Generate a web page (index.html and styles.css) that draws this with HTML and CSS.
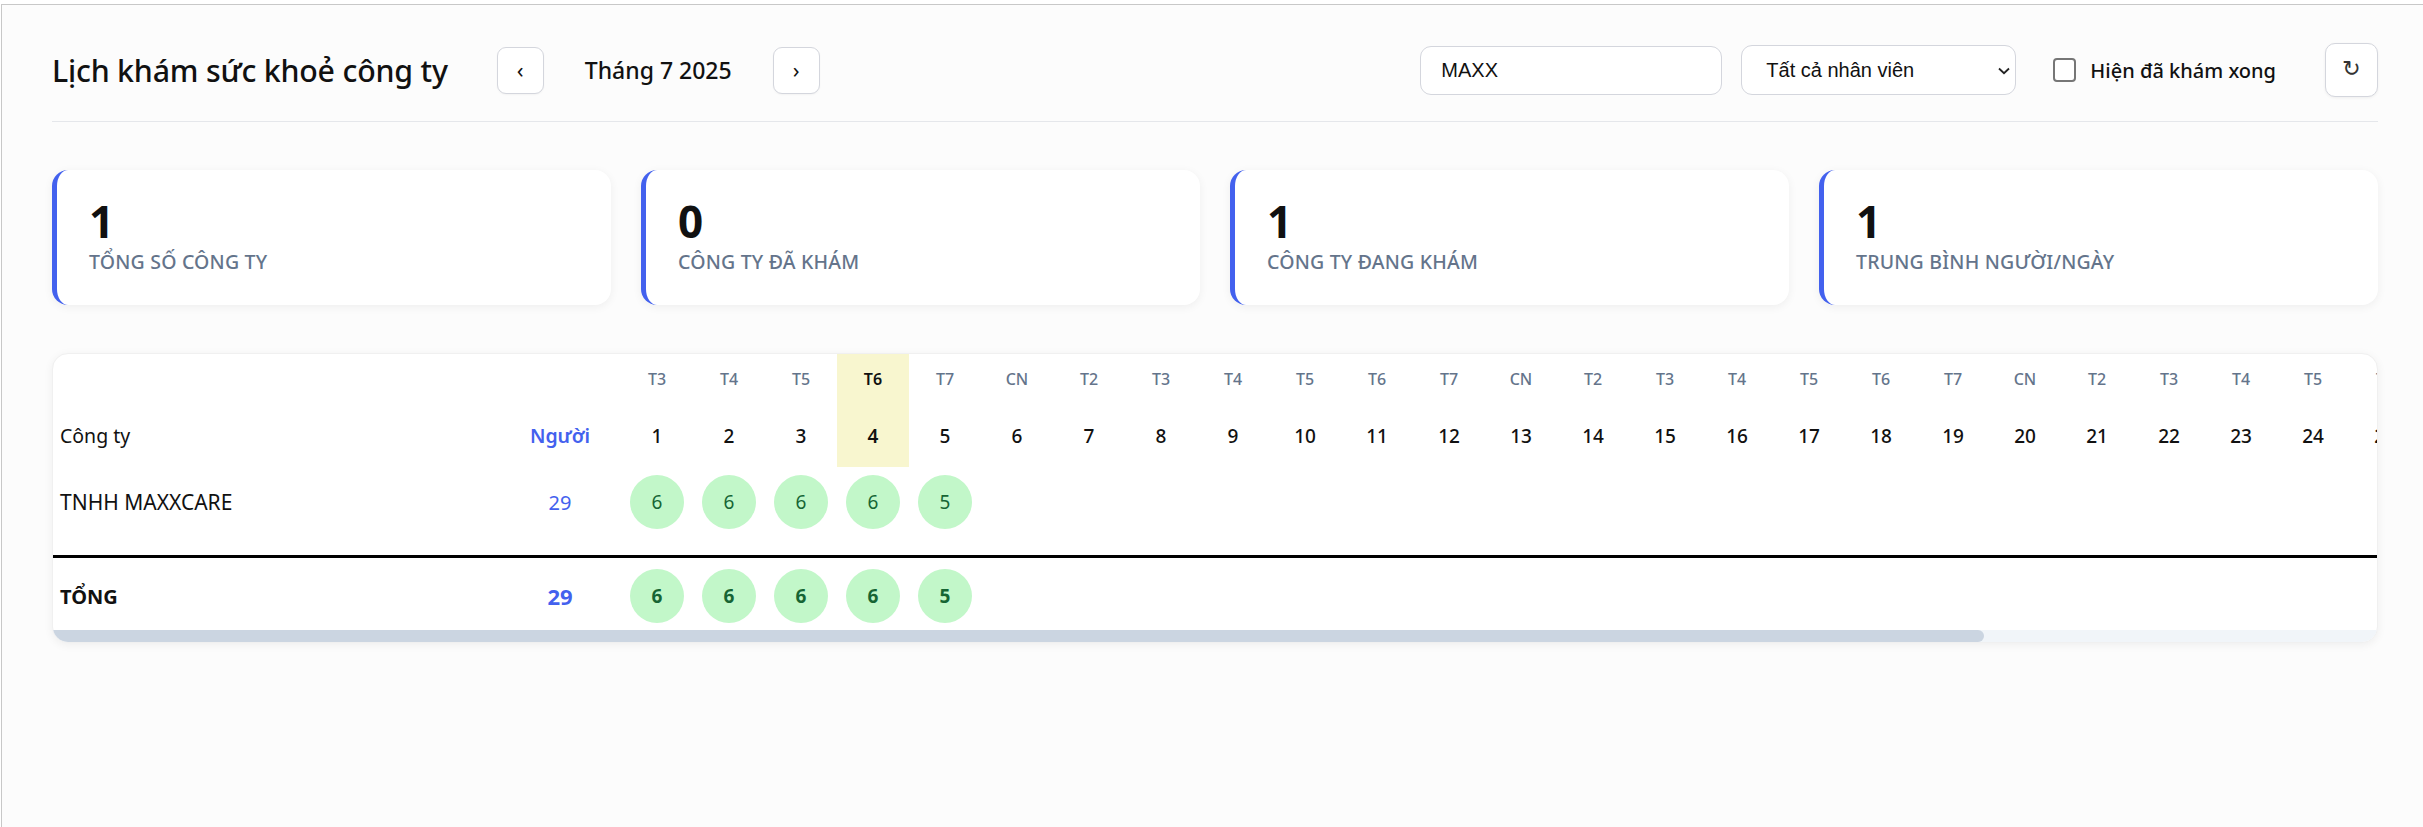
FILE: index.html
```html
<!DOCTYPE html>
<html lang="vi">
<head>
<meta charset="utf-8">
<title>Lịch khám sức khoẻ công ty</title>
<link rel="stylesheet" href="styles.css">
</head>
<body>
<div class="frame">
  <header class="topbar">
    <div class="left-group">
      <h1 class="title">Lịch khám sức khoẻ công ty</h1>
      <div class="month-nav">
        <button class="nav-btn">‹</button>
        <div class="month-label">Tháng 7 2025</div>
        <button class="nav-btn">›</button>
      </div>
    </div>
    <div class="right-group">
      <input class="search" type="text" value="MAXX">
      <div class="select-wrap">
        <select class="staff-select"><option>Tất cả nhân viên</option></select>
        <svg class="chev" width="12" height="8" viewBox="0 0 12 8"><path d="M1 1.5 L6 6.2 L11 1.5" fill="none" stroke="#222" stroke-width="1.8"/></svg>
      </div>
      <label class="check-label"><span class="checkbox"></span><span>Hiện đã khám xong</span></label>
      <button class="refresh-btn">↻</button>
    </div>
  </header>

  <section class="stats">
    <div class="stat"><div class="stat-num">1</div><div class="stat-label">Tổng số công ty</div></div>
    <div class="stat"><div class="stat-num">0</div><div class="stat-label">Công ty đã khám</div></div>
    <div class="stat"><div class="stat-num">1</div><div class="stat-label">Công ty đang khám</div></div>
    <div class="stat"><div class="stat-num">1</div><div class="stat-label">Trung bình người/ngày</div></div>
  </section>

  <section class="table-card">
    <div class="scroller">
      <table class="cal">
        <colgroup>
          <col class="c-company"><col class="c-people">
          <col class="c-day"><col class="c-day"><col class="c-day"><col class="c-day"><col class="c-day"><col class="c-day"><col class="c-day"><col class="c-day"><col class="c-day"><col class="c-day"><col class="c-day"><col class="c-day"><col class="c-day"><col class="c-day"><col class="c-day"><col class="c-day"><col class="c-day"><col class="c-day"><col class="c-day"><col class="c-day"><col class="c-day"><col class="c-day"><col class="c-day"><col class="c-day"><col class="c-day"><col class="c-day"><col class="c-day"><col class="c-day"><col class="c-day"><col class="c-day"><col class="c-day">
        </colgroup>
        <thead>
          <tr class="dow-row">
            <th></th><th></th>
            <th>T3</th><th>T4</th><th>T5</th><th class="today">T6</th><th>T7</th><th>CN</th><th>T2</th>
            <th>T3</th><th>T4</th><th>T5</th><th>T6</th><th>T7</th><th>CN</th><th>T2</th>
            <th>T3</th><th>T4</th><th>T5</th><th>T6</th><th>T7</th><th>CN</th><th>T2</th>
            <th>T3</th><th>T4</th><th>T5</th><th>T6</th><th>T7</th><th>CN</th><th>T2</th>
            <th>T3</th><th>T4</th><th>T5</th>
          </tr>
          <tr class="date-row">
            <th class="company-h">Công ty</th><th class="people-h">Người</th>
            <th>1</th><th>2</th><th>3</th><th class="today">4</th><th>5</th><th>6</th><th>7</th>
            <th>8</th><th>9</th><th>10</th><th>11</th><th>12</th><th>13</th><th>14</th>
            <th>15</th><th>16</th><th>17</th><th>18</th><th>19</th><th>20</th><th>21</th>
            <th>22</th><th>23</th><th>24</th><th>25</th><th>26</th><th>27</th><th>28</th>
            <th>29</th><th>30</th><th>31</th>
          </tr>
        </thead>
        <tbody>
          <tr class="body-row">
            <td class="company">TNHH MAXXCARE</td><td class="people">29</td>
            <td><span class="dot">6</span></td><td><span class="dot">6</span></td><td><span class="dot">6</span></td><td><span class="dot">6</span></td><td><span class="dot">5</span></td>
            <td></td><td></td><td></td><td></td><td></td><td></td><td></td><td></td><td></td><td></td><td></td><td></td><td></td><td></td><td></td><td></td><td></td><td></td><td></td><td></td><td></td><td></td><td></td><td></td><td></td><td></td>
          </tr>
        </tbody>
        <tfoot>
          <tr class="total-row">
            <td class="company total-label">TỔNG</td><td class="people total-num">29</td>
            <td><span class="dot">6</span></td><td><span class="dot">6</span></td><td><span class="dot">6</span></td><td><span class="dot">6</span></td><td><span class="dot">5</span></td>
            <td></td><td></td><td></td><td></td><td></td><td></td><td></td><td></td><td></td><td></td><td></td><td></td><td></td><td></td><td></td><td></td><td></td><td></td><td></td><td></td><td></td><td></td><td></td><td></td><td></td><td></td>
          </tr>
        </tfoot>
      </table>
    </div>
    <div class="scrollbar"><div class="thumb" style="width: 83.1%"></div></div>
  </section>
</div>
</body>
</html>
```

FILE: styles.css
```css
* { box-sizing: border-box; }

html, body {
  margin: 0;
  background: #ffffff;
}

body {
  font-family: "Noto Sans", "Open Sans", sans-serif;
  color: #111827;
}

.frame {
  margin-top: 4px;
  margin-left: 1px;
  border-top: 1px solid #c8c8c8;
  border-left: 1px solid #c8c8c8;
  background: #fcfcfc;
  min-height: 823px;
  padding: 0 45px 40px 50px;
}

/* header */
.topbar {
  display: flex;
  justify-content: space-between;
  align-items: center;
  padding: 38px 0 24px;
  border-bottom: 1px solid #e5e7eb;
}

.left-group {
  display: flex;
  align-items: center;
  gap: 49px;
}

.title {
  margin: 0;
  font-size: 30.3px;
  font-weight: 500;
  color: #111;
  letter-spacing: -0.2px;
}

.month-nav {
  display: flex;
  align-items: center;
}

.nav-btn {
  width: 47px;
  height: 47px;
  border: 1px solid #d4d6dd;
  border-radius: 9px;
  background: #fff;
  font-family: "Noto Sans", sans-serif;
  font-size: 22px;
  line-height: 1;
  color: #111;
  padding: 0 0 3px;
  box-shadow: 0 1px 2px rgba(0,0,0,0.04);
}

.month-label {
  width: 229px;
  text-align: center;
  font-size: 23px;
  font-weight: 500;
  color: #111;
}

.right-group {
  display: flex;
  align-items: center;
}

.search {
  width: 302px;
  height: 49px;
  border: 1px solid #d4d6dd;
  border-radius: 11px;
  padding: 0 20px;
  font-family: "Liberation Sans", Arial, sans-serif;
  font-size: 20px;
  color: #111;
  background: #fff;
  margin-right: 19px;
}

.select-wrap {
  position: relative;
  width: 275px;
  height: 50px;
  margin-right: 37px;
}

.staff-select {
  appearance: none;
  -webkit-appearance: none;
  width: 100%;
  height: 100%;
  border: 1px solid #d4d6dd;
  border-radius: 11px;
  background: #fff;
  padding: 0 20px 0 24px;
  font-family: "Liberation Sans", Arial, sans-serif;
  font-size: 20px;
  color: #111;
}

.chev {
  position: absolute;
  right: 6px;
  top: 22px;
  pointer-events: none;
}

.check-label {
  display: flex;
  align-items: center;
  gap: 14px;
  font-size: 20px;
  font-weight: 500;
  color: #111;
  margin-right: 49px;
}

.checkbox {
  width: 23px;
  height: 24px;
  border: 2px solid #767676;
  border-radius: 4px;
  background: #fff;
}

.refresh-btn {
  width: 53px;
  height: 54px;
  border: 1px solid #d4d6dd;
  border-radius: 10px;
  background: #fff;
  font-family: "DejaVu Sans", sans-serif;
  font-size: 22px;
  line-height: 1;
  color: #333;
  padding: 0 0 2px;
  box-shadow: 0 1px 3px rgba(0,0,0,0.06);
}

/* stats */
.stats {
  display: grid;
  grid-template-columns: repeat(4, 1fr);
  gap: 30px;
  margin-top: 48px;
}

.stat {
  height: 135px;
  background: #fff;
  border-radius: 16px;
  border-left: 5px solid #4361ee;
  box-shadow: 0 2px 10px rgba(0,0,0,0.06);
  padding: 29px 32px 0;
}

.stat-num {
  font-size: 44px;
  font-weight: 700;
  line-height: 1;
  color: #111;
}

.stat-label {
  margin-top: 7px;
  font-size: 19.5px;
  line-height: 1.2;
  font-weight: 500;
  color: #64748b;
  text-transform: uppercase;
  letter-spacing: 0.2px;
}

/* table */
.table-card {
  margin-top: 48px;
  background: #fff;
  border-radius: 16px;
  border: 1px solid #f0f0f0;
  box-shadow: 0 2px 10px rgba(0,0,0,0.06);
  overflow: hidden;
}

.scroller {
  overflow: hidden;
}

.scrollbar {
  height: 12px;
  background: #f1f5f9;
}

.thumb {
  height: 100%;
  background: #cbd5e1;
  border-radius: 0 6px 6px 0;
}

.cal {
  table-layout: fixed;
  border-collapse: separate;
  border-spacing: 0;
  width: 2799px;
}

.c-company { width: 446px; }
.c-people { width: 122px; }
.c-day { width: 72px; }

.cal th, .cal td {
  padding: 0;
  text-align: center;
  vertical-align: middle;
}

.dow-row th {
  height: 50px;
  font-size: 16px;
  font-weight: 500;
  color: #64748b;
}

.date-row th {
  height: 63px;
  font-size: 19px;
  font-weight: 500;
  color: #111;
}

.cal th.today {
  background: #f8f6cf;
  color: #111;
  font-weight: 600;
}

.cal .company-h,
.cal .company {
  text-align: left;
  padding-left: 7px;
  font-size: 19.5px;
  font-weight: 400;
  color: #111;
}

.cal .company {
  font-size: 21px;
}

.cal .people-h {
  font-size: 19.5px;
  font-weight: 600;
  color: #4361ee;
}

.body-row td {
  padding: 8px 0 26px;
}

.cal .people {
  font-size: 20px;
  color: #4361ee;
}

.total-row td {
  border-top: 3px solid #000;
  padding: 11px 0 7px;
}

.cal .total-label {
  font-size: 20px;
  font-weight: 700;
}

.cal .total-num {
  font-weight: 700;
  font-size: 22px;
}

.dot {
  display: inline-flex;
  align-items: center;
  justify-content: center;
  width: 54px;
  height: 54px;
  border-radius: 50%;
  background: #c2f7c9;
  color: #166534;
  font-size: 19px;
  vertical-align: middle;
}

.total-row .dot {
  font-weight: 700;
}
```
